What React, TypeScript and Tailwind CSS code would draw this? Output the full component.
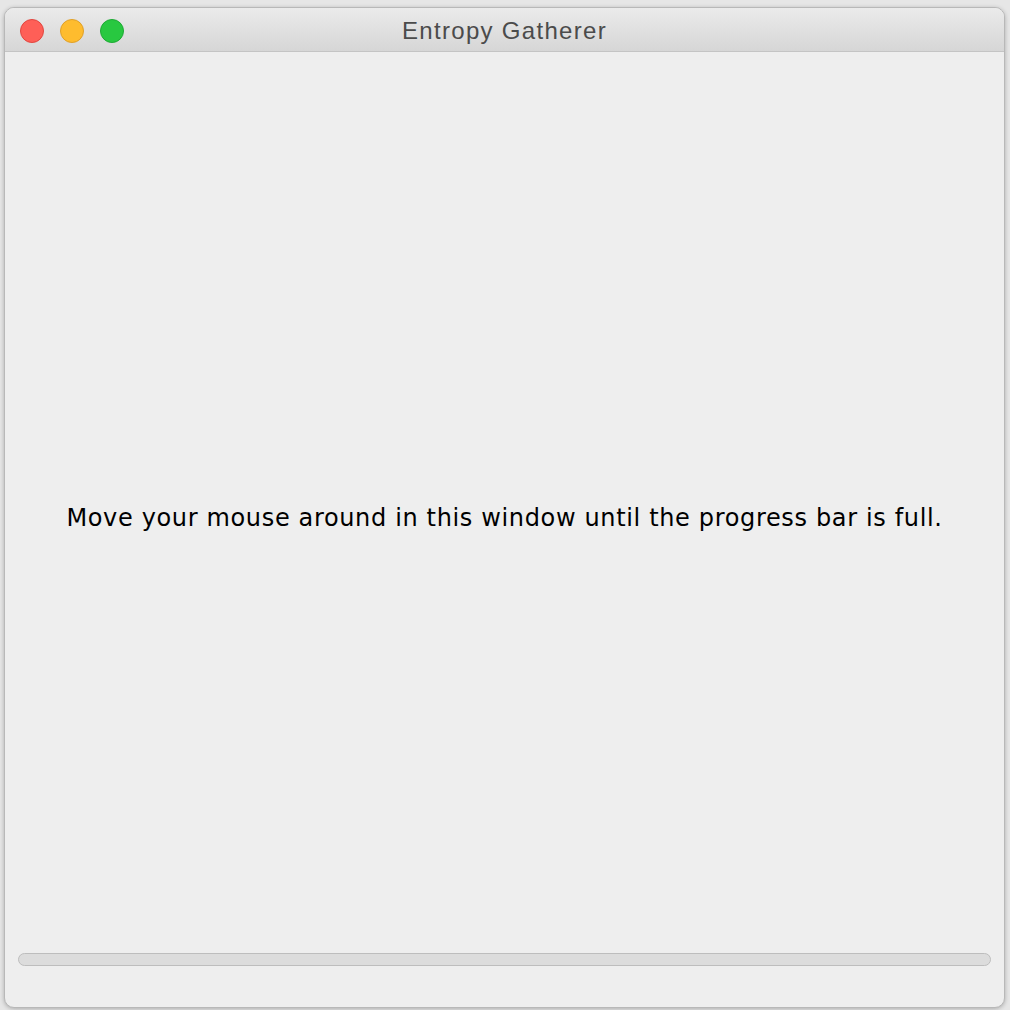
export default function App() {
  return (
    <div className="w-[1010px] h-[1010px] bg-[#e6e6e6] pt-[7px] pl-[4px]">
      <div className="w-[1001px] h-[1001px] flex flex-col rounded-[10px] overflow-hidden border border-[#b8b8b8] shadow-[0_1px_4px_rgba(0,0,0,0.25)] bg-[#eeeeee]">
        {/* Title bar */}
        <div className="relative h-[44px] shrink-0 flex items-center justify-center border-b border-[#c4c4c4] bg-gradient-to-b from-[#ebebeb] to-[#d6d6d6]">
          <div className="absolute left-[15px] top-[11px] flex gap-[16px]">
            <span className="w-[24px] h-[24px] rounded-full bg-[#fe5f57] border border-[#e1463f]" />
            <span className="w-[24px] h-[24px] rounded-full bg-[#febc2e] border border-[#e0a028]" />
            <span className="w-[24px] h-[24px] rounded-full bg-[#28c840] border border-[#1ea934]" />
          </div>
          <span className="text-[24px] tracking-[1.3px] text-[#4b4b4b] font-['Liberation_Sans',Arial,sans-serif] leading-none pt-[3px]">
            Entropy Gatherer
          </span>
        </div>

        {/* Body */}
        <div className="flex-1 flex items-center justify-center">
          <p className="text-[24px] tracking-[0.65px] text-black font-['DejaVu_Sans',Verdana,sans-serif] pt-[30px]">
            Move your mouse around in this window until the progress bar is full.
          </p>
        </div>

        {/* Progress */}
        <div className="px-[13px] pb-[41px]">
          <div className="h-[13px] rounded-full bg-[#dcdcdc] border border-[#bdbdbd]" />
        </div>
      </div>
    </div>
  );
}
